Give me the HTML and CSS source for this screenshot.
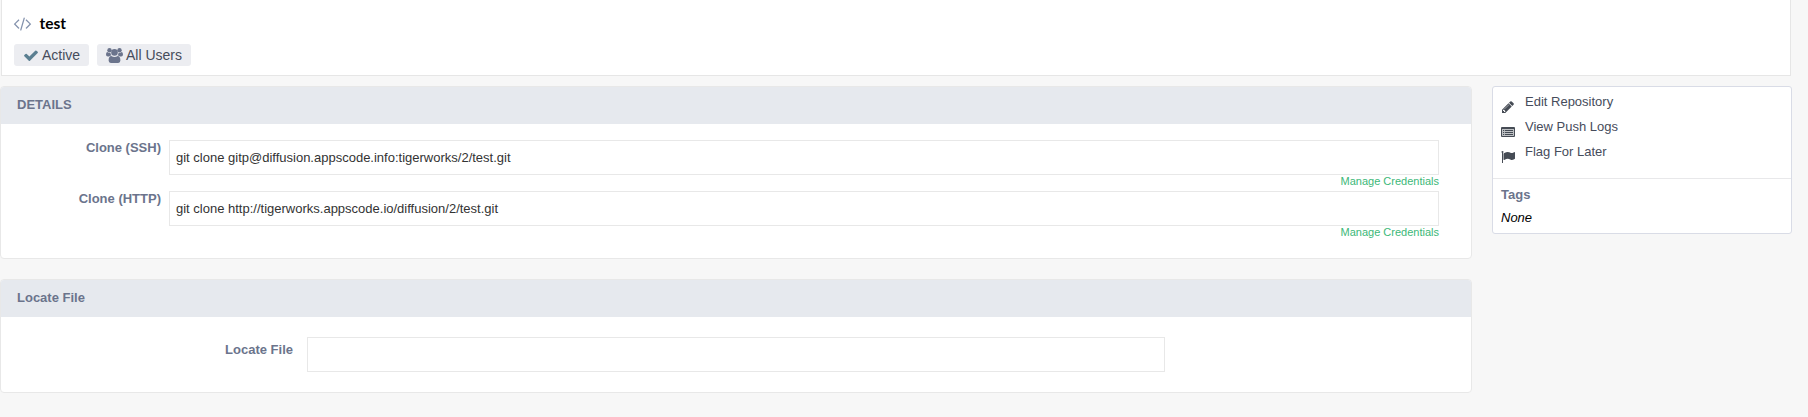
FILE: index.html
```html
<!DOCTYPE html>
<html lang="en">
<head>
<meta charset="utf-8">
<title>test</title>
<link rel="stylesheet" href="styles.css">
</head>
<body>
<header class="page-header">
  <div class="title-row">
    <svg class="icon-code" viewBox="0 0 1792 1792"><path d="M553 1399l-50 50q-10 10-23 10t-23-10l-466-466q-10-10-10-23t10-23l466-466q10-10 23-10t23 10l50 50q10 10 10 23t-10 23l-393 393 393 393q10 10 10 23t-10 23zm591-1067l-373 1291q-4 13-15.5 19.5t-23.5 2.5l-62-17q-13-4-19.5-15.5t-2.5-24.5l373-1291q4-13 15.5-19.5t23.5-2.5l62 17q13 4 19.5 15.5t2.5 24.5zm657 651l-466 466q-10 10-23 10t-23-10l-50-50q-10-10-10-23t10-23l393-393-393-393q-10-10-10-23t10-23l50-50q10-10 23-10t23 10l466 466q10 10 10 23t-10 23z"/></svg>
    <h1 class="title">test</h1>
  </div>
  <div class="chips">
    <span class="chip chip-active"><svg class="icon-check" viewBox="121 288 1550 1234"><path d="M1671 566q0 40-28 68l-724 724-136 136q-28 28-68 28t-68-28l-136-136-362-362q-28-28-28-68t28-68l136-136q28-28 68-28t68 28l294 295 656-657q28-28 68-28t68 28l136 136q28 28 28 68z"/></svg>Active</span>
    <span class="chip chip-users"><svg class="icon-users" viewBox="0 0 17 15"><circle cx="3.5" cy="2.2" r="2.2"/><circle cx="13.5" cy="2.2" r="2.2"/><circle cx="8.5" cy="4.4" r="3.3"/><path d="M0 6.6Q0 4 1.3 4Q3.3 5.4 4.4 4.8Q4.6 6.4 5.4 7.4Q3.9 7.5 3 8.6H1.8Q0 8.6 0 6.6ZM17 6.6Q17 4 15.7 4Q13.7 5.4 12.6 4.8Q12.4 6.4 11.6 7.4Q13.1 7.5 14 8.6H15.2Q17 8.6 17 6.6ZM2.6 12.6Q2.6 8 5.3 8Q8.5 10.2 11.7 8Q14.4 8 14.4 12.6Q14.4 15 12.2 15H4.8Q2.6 15 2.6 12.6Z"/></svg>All Users</span>
  </div>
</header>
<div class="layout">
  <main class="main">
    <section class="panel">
      <h2 class="panel-head">DETAILS</h2>
      <div class="details">
        <div class="clone-row">
          <div class="label">Clone (SSH)</div>
          <div class="clone"><div class="field">git clone gitp@diffusion.appscode.info:tigerworks/2/test.git</div><a class="manage">Manage Credentials</a></div>
        </div>
        <div class="clone-row">
          <div class="label">Clone (HTTP)</div>
          <div class="clone"><div class="field">git clone http://tigerworks.appscode.io/diffusion/2/test.git</div><a class="manage">Manage Credentials</a></div>
        </div>
      </div>
    </section>
    <section class="panel">
      <h2 class="panel-head">Locate File</h2>
      <div class="locate">
        <div class="label">Locate File</div>
        <div class="field"></div>
      </div>
    </section>
  </main>
  <aside class="side">
    <ul class="actions">
      <li class="action"><svg class="action-icon" viewBox="0 0 1792 1792"><path d="M491 1536l91-91-235-235-91 91v107h128v128h107zm523-928q0-22-22-22-10 0-17 7l-542 542q-7 7-7 17 0 22 22 22 10 0 17-7l542-542q7-7 7-17zm-54-192l416 416-832 832h-416v-416zm683 96q0 53-37 90l-166 166-416-416 166-165q36-38 90-38 53 0 91 38l235 234q37 39 37 91z"/></svg>Edit Repository</li>
      <li class="action"><svg class="action-icon" viewBox="0 0 14 14"><path fill-rule="evenodd" d="M1 2H13Q14 2 14 3V11Q14 12 13 12H1Q0 12 0 11V3Q0 2 1 2ZM1 4V10.6Q1 11 1.4 11H12.6Q13 11 13 10.6V4ZM2 5H3.2V6H2ZM4 5H12V6H4ZM2 7H3.2V8H2ZM4 7H12V8H4ZM2 9H3.2V10H2ZM4 9H12V10H4Z"/><path opacity=".35" d="M1 4H13V11H1Z"/></svg>View Push Logs</li>
      <li class="action"><svg class="action-icon" viewBox="0 0 1792 1792"><path d="M320 256q0 72-64 110v1266q0 13-9.5 22.5t-22.5 9.5h-64q-13 0-22.5-9.5t-9.5-22.5v-1266q-64-38-64-110 0-53 37.5-90.5t90.5-37.5 90.5 37.5 37.5 90.5zm1472 64v763q0 25-12.5 38.5t-39.5 27.5q-215 116-369 116-61 0-123.5-22t-108.5-48-115.5-48-142.5-22q-192 0-464 146-17 9-33 9-26 0-45-19t-19-45v-742q0-32 31-55 21-14 79-43 236-120 421-120 107 0 200 29t219 88q38 19 88 19 54 0 117.5-21t110-47 88-47 54.5-21q26 0 45 19t19 45z"/></svg>Flag For Later</li>
    </ul>
    <div class="tags">
      <h3 class="tags-title">Tags</h3>
      <em class="none">None</em>
    </div>
  </aside>
</div>
</body>
</html>
```
FILE: styles.css
```css
* { box-sizing: border-box; }
body {
  margin: 0;
  background: #f7f7f7;
  color: #464c5b;
  font: 13px/20px "Liberation Sans", Arial, sans-serif;
}
h1, h2, h3, ul { margin: 0; padding: 0; list-style: none; }
.page-header {
  width: 1790px;
  height: 76px;
  margin-left: 1px;
  padding: 13px 0 0 12px;
  background: #fff;
  border: solid #e6e6e6;
  border-width: 0 1px 1px;
}
.title-row { display: flex; align-items: center; height: 20px; }
.icon-code { width: 17px; height: 17px; margin-right: 8.5px; fill: #8492ad; overflow: visible; }
.title { font: bold 15.5px/20px Lato, sans-serif; color: #000; }
.chips { display: flex; gap: 8px; margin-top: 11px; }
.chip {
  display: flex;
  align-items: center;
  height: 22px;
  border-radius: 3px;
  background: #ecedf1;
  font-size: 14px;
}
.chip-active { width: 75px; padding-left: 10px; }
.chip-users { width: 94px; padding-left: 9px; }
.icon-check { width: 14px; height: 11px; margin-right: 4px; fill: #5b7f91; }
.icon-users { width: 17px; height: 15px; margin-right: 3px; fill: #6b748c; }
.layout { display: flex; align-items: flex-start; gap: 20px; margin-top: 10px; }
.main { display: flex; flex-direction: column; gap: 20px; width: 1472px; }
.panel {
  background: #fff;
  border: 1px solid #e8e8e8;
  border-radius: 4px;
  overflow: hidden;
}
.panel-head {
  height: 37px;
  padding-left: 16px;
  background: #e6e9ee;
  color: #6b748c;
  font-size: 13px;
  line-height: 35px;
}
.label { color: #6b748c; font-weight: bold; text-align: right; }
.field {
  height: 35px;
  padding-left: 6px;
  border: 1px solid #e8e8e8;
  color: #333;
  line-height: 34px;
}
.details { height: 134px; padding-top: 16px; }
.clone-row { display: flex; gap: 8px; height: 51px; }
.clone-row .label { width: 160px; line-height: 15px; }
.clone { width: 1270px; display: flex; flex-direction: column; }
.manage { align-self: flex-end; color: #3cb878; font-size: 11px; line-height: 13px; }
.locate { display: flex; gap: 14px; height: 75px; padding-top: 20px; }
.locate .label { width: 292px; line-height: 25px; }
.locate .field { width: 858px; }
.side {
  width: 300px;
  height: 148px;
  background: #fff;
  border: 1px solid #d9dce6;
  border-radius: 3px;
}
.actions { height: 92px; padding: 2px 0 0 8px; border-bottom: 1px solid #e8e8ea; }
.action { display: flex; height: 25px; line-height: 25px; }
.action-icon { width: 14px; height: 14px; margin: 11px 10px 0 0; fill: #464c55; }
.tags { padding: 6px 0 0 8px; }
.tags-title { font-size: 13px; line-height: 20px; color: #6b748c; }
.none { display: block; color: #000; margin-top: 3px; }
```
